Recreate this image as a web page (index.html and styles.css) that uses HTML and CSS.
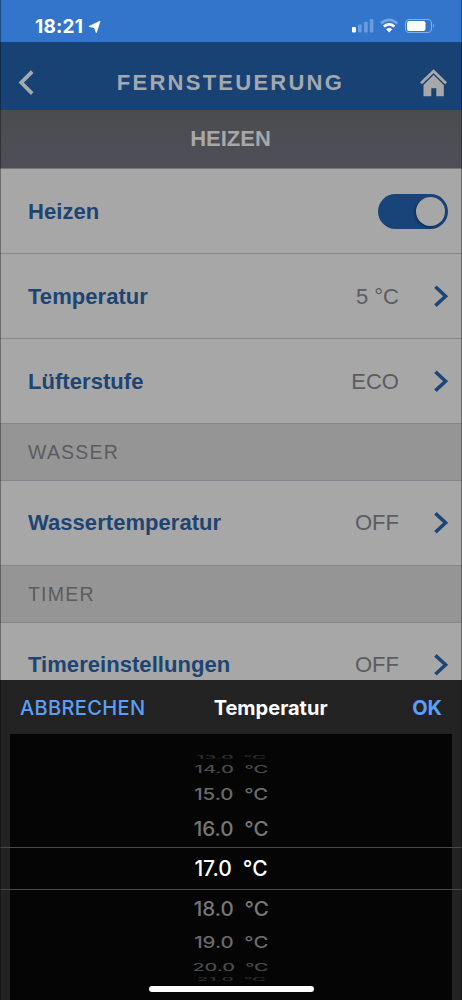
FILE: index.html
```
<!DOCTYPE html>
<html lang="de">
<head>
<meta charset="utf-8">
<title>Fernsteuerung</title>
<link rel="stylesheet" href="styles.css">
</head>
<body>
<div class="screen">
  <div class="status">
    <span class="time">18:21</span>
    <svg class="loc" width="13" height="14" viewBox="0 0 13 14"><path d="M12 1.2 8.3 12.8 6.5 7.6 1 6.4Z" fill="#fff" stroke="#fff" stroke-width=".8" stroke-linejoin="round"/></svg>
    <svg class="signals" width="84" height="16" viewBox="0 0 84 16">
      <rect x="0" y="9" width="4" height="5.5" rx="1" fill="#fff"/>
      <g fill="#659ddf"><rect x="6" y="6.5" width="3.7" height="8" rx="1"/><rect x="12" y="3.7" width="3.7" height="10.8" rx="1"/><rect x="17.7" y="1" width="3.7" height="13.5" rx="1"/></g>
      <g fill="none"><path d="M28.9 5.5Q37.2-1.7 45.5 5.5" stroke="#72a6e2" stroke-width="2.5"/><path d="M31.8 8.5Q37.2 4.2 42.6 8.5" stroke="#fff" stroke-width="2.5"/></g>
      <path d="M34.2 11.2Q37.2 8.9 40.2 11.2L37.2 14.4Z" fill="#fff"/>
      <rect x="53.5" y="1.5" width="26" height="13" rx="3.8" fill="none" stroke="#83b1e6" stroke-width="1.1"/>
      <rect x="55" y="3" width="18.5" height="10" rx="2.2" fill="#fff"/>
      <path d="M81 5.8Q83.2 7.8 81 10Z" fill="#83b1e6"/>
    </svg>
  </div>
  <header class="nav">
    <svg width="18" height="28" viewBox="0 0 18 28"><path d="M14.2 2.6 3.2 13.6 14.2 24.6" fill="none" stroke="#a5aab0" stroke-width="3.7"/></svg>
    <h1>FERNSTEUERUNG</h1>
    <svg width="28" height="28" viewBox="0 0 28 28"><path d="M2 14.3 14.6 2.2 27 14.3" fill="none" stroke="#a8a8aa" stroke-width="2.8"/><path d="M14.6 6 24.8 16V27.2H17.3V19.3H12.3V27.2H4.5V16Z" fill="#a8a8aa"/></svg>
  </header>
  <h2 class="band">HEIZEN</h2>
  <main class="list">
    <div class="row"><span class="label">Heizen</span><span class="switch"><i class="knob"></i></span></div>
    <div class="row"><span class="label">Temperatur</span><span class="value">5 °C</span><svg class="chev" width="16" height="24" viewBox="0 0 16 24"><path d="M2.4 2.8 12.6 12.2 2.4 21.6"/></svg></div>
    <div class="row last"><span class="label">Lüfterstufe</span><span class="value">ECO</span><svg class="chev" width="16" height="24" viewBox="0 0 16 24"><path d="M2.4 2.8 12.6 12.2 2.4 21.6"/></svg></div>
    <h3 class="section">WASSER</h3>
    <div class="row last"><span class="label">Wassertemperatur</span><span class="value">OFF</span><svg class="chev" width="16" height="24" viewBox="0 0 16 24"><path d="M2.4 2.4 12.6 11.8 2.4 21.2"/></svg></div>
    <h3 class="section">TIMER</h3>
    <div class="row last"><span class="label">Timereinstellungen</span><span class="value">OFF</span><svg class="chev" width="16" height="24" viewBox="0 0 16 24"><path d="M2.4 2.4 12.6 11.8 2.4 21.2"/></svg></div>
  </main>
  <section class="sheet">
    <div class="sheet-bar"><span class="cancel">ABBRECHEN</span><strong class="title">Temperatur</strong><strong class="ok">OK</strong></div>
    <div class="wheel">
      <div class="opt o13"><p><span>13.0</span><span>°C</span></p></div>
      <div class="opt o14"><p><span>14.0</span><span>°C</span></p></div>
      <div class="opt o15"><p><span>15.0</span><span>°C</span></p></div>
      <div class="opt o16"><p><span>16.0</span><span>°C</span></p></div>
      <div class="opt o17"><p><span>17.0</span><span>°C</span></p></div>
      <div class="opt o18"><p><span>18.0</span><span>°C</span></p></div>
      <div class="opt o19"><p><span>19.0</span><span>°C</span></p></div>
      <div class="opt o20"><p><span>20.0</span><span>°C</span></p></div>
      <div class="opt o21"><p><span>21.0</span><span>°C</span></p></div>
      <div class="home"></div>
    </div>
  </section>
</div>
</body>
</html>
```

FILE: styles.css
```
* { box-sizing: border-box; margin: 0; padding: 0; }
body { background: #000; font-family: "Liberation Sans", Arial, sans-serif; }
svg { display: block; flex: none; }

.screen { position: relative; width: 462px; height: 1000px; overflow: hidden; display: flex; flex-direction: column; }
.screen::after { content: ""; position: absolute; inset: 0; border: solid rgba(0, 0, 0, .35); border-width: 0 1px; }

.status { flex: none; height: 42px; background: #3275ca; display: flex; align-items: center; padding: 10px 26px 0 35px; color: #fff; }
.time { font: 700 19px/22px Inter, sans-serif; letter-spacing: .2px; padding-top: 2px; }
.loc { margin: 1px 0 0 5px; }
.signals { margin-left: auto; }

.nav { flex: none; height: 68px; background: #194274; display: flex; align-items: center; justify-content: space-between; padding: 13px 15px 0 18px; }
.nav h1 { font-size: 22px; line-height: 26px; letter-spacing: 2.25px; color: #a3a8af; padding-left: 6px; }

.band { flex: none; height: 59px; background: linear-gradient(#4b4c4f, #4f4f58); border-bottom: 1px solid #77777d; color: #a7a7a9; font-size: 22px; line-height: 57px; text-align: center; padding-right: 1px; }

.list { height: 511px; flex: none; overflow: hidden; background: #a7a7a7; }
.row { height: 85px; display: flex; align-items: center; padding: 0 14px 0 28px; border-bottom: 1px solid #85878d; }
.row:not(.last) .label, .row:not(.last) .value, .row:nth-child(3) .label, .row:nth-child(3) .value { padding-top: 2px; }
.row.last { height: 84px; border-bottom: 0; }
.label { font-weight: 700; font-size: 22px; letter-spacing: .05px; color: #1d4472; margin-right: auto; }
.value { font-size: 22px; color: #5b5c62; margin-right: 34px; }
.chev path { fill: none; stroke: #1c4677; stroke-width: 3.5; }
.chev { margin-right: -1px; }
.switch { width: 70px; height: 35px; border-radius: 18px; background: #184479; padding: 3px; display: flex; justify-content: flex-end; }
.knob { width: 29px; height: 29px; border-radius: 50%; background: #a7a7a7; box-shadow: -1px 1px 3px rgba(0, 0, 0, .4); }
.section { height: 58px; background: #959595; border: solid #85878d; border-width: 1px 0; padding-left: 28px; font-weight: 400; font-size: 19.5px; line-height: 56px; letter-spacing: 1.2px; color: #5b5c61; }

.sheet { flex: none; height: 320px; background: #232323; font-family: Inter, sans-serif; }
.sheet-bar { height: 54px; display: flex; align-items: center; justify-content: space-between; padding: 1px 20px 0; font-size: 20px; }
.cancel, .ok { color: #5ba0f6; }
.cancel { width: 125px; font-weight: 500; letter-spacing: .35px; }
.title { color: #fff; margin-left: -16px; }
.wheel { height: 266px; margin: 0 10px; padding-top: 20px; background: #050505; display: flex; flex-direction: column; align-items: center; }
.opt { width: 462px; flex: none; display: flex; align-items: center; justify-content: center; color: #777; font-weight: 500; font-size: 21px; }
.opt p { flex: none; display: flex; gap: 11px; line-height: 24px; }
.o13 { height: 7px; color: #303030; }
.o13 p { transform: scale(.91, .2); }
.o14 { height: 18px; color: #4c4c4c; }
.o14 p { transform: scale(.96, .46); }
.o15 { height: 31px; color: #6b6b6b; }
.o15 p { transform: scale(.97, .76); }
.o16 { height: 37px; }
.o16 p { transform: scale(.98, .95); }
.o17 { height: 43px; border: solid #484848; border-width: 1px 0; color: #fff; padding-top: 1px; }
.o18 { height: 38px; }
.o18 p { transform: scale(.98, .95); }
.o19 { height: 30px; color: #6b6b6b; }
.o19 p { transform: scale(.97, .76); }
.o20 { height: 20px; color: #4c4c4c; }
.o20 p { transform: scale(.94, .46); }
.o21 { height: 3px; color: #303030; }
.o21 p { transform: scale(.9, .2); }
.home { flex: none; width: 165px; height: 6px; border-radius: 3px; background: #fff; margin-top: 5px; }
```
